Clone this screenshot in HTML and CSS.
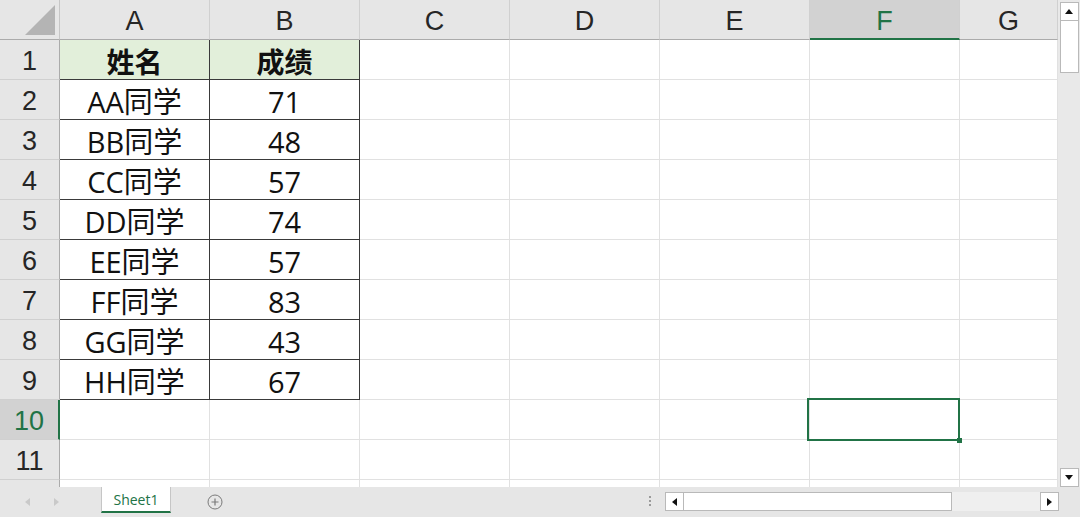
FILE: index.html
```html
<!DOCTYPE html>
<html lang="zh-CN">
<head>
    <meta charset="UTF-8">
    <title>成绩表 - Sheet1</title>
    <link rel="stylesheet" href="styles.css">
</head>
<body>
    <div class="workbook">
        <div class="main">
            <!-- Worksheet grid -->
            <div class="sheet">
                <div class="row head-row">
                    <div class="corner"><span class="corner-tri"></span></div>
                    <div class="col-head">A</div>
                    <div class="col-head">B</div>
                    <div class="col-head">C</div>
                    <div class="col-head">D</div>
                    <div class="col-head">E</div>
                    <div class="col-head active">F</div>
                    <div class="col-head">G</div>
                </div>
                <div class="row">
                    <div class="row-head">1</div>
                    <div class="cell data title">姓名</div>
                    <div class="cell data title">成绩</div>
                    <div class="cell"></div><div class="cell"></div><div class="cell"></div><div class="cell"></div><div class="cell"></div>
                </div>
                <div class="row">
                    <div class="row-head">2</div>
                    <div class="cell data">AA同学</div>
                    <div class="cell data">71</div>
                    <div class="cell"></div><div class="cell"></div><div class="cell"></div><div class="cell"></div><div class="cell"></div>
                </div>
                <div class="row">
                    <div class="row-head">3</div>
                    <div class="cell data">BB同学</div>
                    <div class="cell data">48</div>
                    <div class="cell"></div><div class="cell"></div><div class="cell"></div><div class="cell"></div><div class="cell"></div>
                </div>
                <div class="row">
                    <div class="row-head">4</div>
                    <div class="cell data">CC同学</div>
                    <div class="cell data">57</div>
                    <div class="cell"></div><div class="cell"></div><div class="cell"></div><div class="cell"></div><div class="cell"></div>
                </div>
                <div class="row">
                    <div class="row-head">5</div>
                    <div class="cell data">DD同学</div>
                    <div class="cell data">74</div>
                    <div class="cell"></div><div class="cell"></div><div class="cell"></div><div class="cell"></div><div class="cell"></div>
                </div>
                <div class="row">
                    <div class="row-head">6</div>
                    <div class="cell data">EE同学</div>
                    <div class="cell data">57</div>
                    <div class="cell"></div><div class="cell"></div><div class="cell"></div><div class="cell"></div><div class="cell"></div>
                </div>
                <div class="row">
                    <div class="row-head">7</div>
                    <div class="cell data">FF同学</div>
                    <div class="cell data">83</div>
                    <div class="cell"></div><div class="cell"></div><div class="cell"></div><div class="cell"></div><div class="cell"></div>
                </div>
                <div class="row">
                    <div class="row-head">8</div>
                    <div class="cell data">GG同学</div>
                    <div class="cell data">43</div>
                    <div class="cell"></div><div class="cell"></div><div class="cell"></div><div class="cell"></div><div class="cell"></div>
                </div>
                <div class="row">
                    <div class="row-head">9</div>
                    <div class="cell data">HH同学</div>
                    <div class="cell data">67</div>
                    <div class="cell"></div><div class="cell"></div><div class="cell"></div><div class="cell"></div><div class="cell"></div>
                </div>
                <div class="row">
                    <div class="row-head active">10</div>
                    <div class="cell"></div><div class="cell"></div><div class="cell"></div><div class="cell"></div><div class="cell"></div>
                    <div class="cell selected"></div>
                    <div class="cell"></div>
                </div>
                <div class="row">
                    <div class="row-head">11</div>
                    <div class="cell"></div><div class="cell"></div><div class="cell"></div><div class="cell"></div><div class="cell"></div><div class="cell"></div><div class="cell"></div>
                </div>
                <!-- next row only peeks in under row 11 -->
                <div class="row">
                    <div class="row-head"></div>
                    <div class="cell"></div><div class="cell"></div><div class="cell"></div><div class="cell"></div><div class="cell"></div><div class="cell"></div><div class="cell"></div>
                </div>
            </div>

            <!-- Vertical scrollbar -->
            <div class="vscroll">
                <div class="sb-btn"><span class="tri up"></span></div>
                <div class="vthumb"></div>
                <div class="vtrack"></div>
                <div class="sb-btn"><span class="tri down"></span></div>
            </div>
        </div>

        <!-- Sheet tabs and horizontal scrollbar -->
        <div class="tabbar">
            <div class="tab-nav">
                <span class="tri left faint"></span>
                <span class="tri right faint"></span>
            </div>
            <div class="tab">Sheet1</div>
            <div class="add-sheet">
                <svg width="16" height="16" viewBox="0 0 16 16">
                    <circle cx="8" cy="8" r="7" fill="none" stroke="#7a7a7a" stroke-width="1"/>
                    <path d="M8 4.5v7M4.5 8h7" stroke="#7a7a7a" stroke-width="1.2"/>
                </svg>
            </div>
            <div class="spacer"></div>
            <div class="split-dots"><i></i><i></i><i></i></div>
            <div class="hscroll">
                <div class="sb-btn"><span class="tri left"></span></div>
                <div class="hthumb"></div>
                <div class="htrack"></div>
                <div class="sb-btn"><span class="tri right"></span></div>
            </div>
        </div>
    </div>
</body>
</html>
```

FILE: styles.css
```css
* {
    box-sizing: border-box;
}

body {
    margin: 0;
    font-family: "Liberation Sans", Arial, sans-serif;
    background-color: #e6e6e6;
}

.workbook {
    width: 1080px;
    height: 517px;
    display: flex;
    flex-direction: column;
    overflow: hidden;
}

.main {
    display: flex;
    height: 487px;
    flex-shrink: 0;
}

/* grid */

.sheet {
    width: 1058px;
    height: 487px;
    overflow: hidden;
    background-color: white;
}

.row {
    display: grid;
    grid-template-columns: 60px repeat(6, 150px) 98px;
    grid-template-rows: 40px;
    height: 40px;
}

.head-row {
    background-color: #e6e6e6;
}

.corner {
    position: relative;
    border-right: 1px solid #c6c6c6;
    border-bottom: 1px solid #ababab;
}

.corner-tri {
    position: absolute;
    right: 4px;
    bottom: 4px;
    width: 0;
    height: 0;
    border-left: 30px solid transparent;
    border-bottom: 30px solid #b4b4b4;
}

.col-head {
    border-right: 1px solid #d0d0d0;
    border-bottom: 1px solid #ababab;
    font-size: 27px;
    line-height: 1;
    color: #262626;
    display: flex;
    align-items: center;
    justify-content: center;
    padding-top: 3px;
}

.col-head.active {
    background-color: #d2d2d2;
    color: #217346;
    border-bottom: 2px solid #217346;
    padding-top: 4px;
}

.row-head {
    background-color: #e6e6e6;
    border-right: 1px solid #ababab;
    border-bottom: 1px solid #d0d0d0;
    font-size: 27px;
    line-height: 1;
    color: #262626;
    display: flex;
    align-items: center;
    justify-content: center;
    padding-top: 3px;
}

.row-head.active {
    background-color: #d2d2d2;
    color: #217346;
    border-right: 2px solid #217346;
}

.cell {
    min-height: 0;
    border-right: 1px solid #e1e1e1;
    border-bottom: 1px solid #e1e1e1;
}

.data {
    border-right-color: #3a3a3a;
    border-bottom-color: #3a3a3a;
    font-family: "Open Sans", "Noto Sans CJK SC", sans-serif;
    font-size: 29px;
    line-height: 1;
    color: #111;
    display: flex;
    align-items: center;
    justify-content: center;
    padding-top: 3px;
    overflow: hidden;
}

.title {
    background-color: #e2efda;
    font-family: "Noto Sans CJK SC", sans-serif;
    font-weight: bold;
    font-size: 28px;
    padding-top: 2px;
}

.selected {
    position: relative;
}

.selected::after {
    content: "";
    position: absolute;
    left: -3px;
    top: -2px;
    right: -1px;
    bottom: -2px;
    border: 2px solid #217346;
}

.selected::before {
    content: "";
    position: absolute;
    right: -3px;
    bottom: -4px;
    width: 5px;
    height: 5px;
    background-color: #217346;
    z-index: 1;
}

/* scrollbars */

.vscroll {
    width: 22px;
    display: flex;
    flex-direction: column;
    align-items: center;
    padding-top: 2px;
    background-color: #e9e9e9;
}

.sb-btn {
    width: 19px;
    height: 19px;
    background-color: white;
    border: 1px solid #b9b9b9;
    display: flex;
    align-items: center;
    justify-content: center;
    flex-shrink: 0;
}

.vthumb {
    width: 19px;
    height: 52px;
    background-color: white;
    border: 1px solid #b9b9b9;
    border-top: none;
}

.vtrack {
    flex: 1;
}

.tri {
    width: 0;
    height: 0;
    border: 4px solid transparent;
}

.tri.up {
    border-bottom: 5px solid #111;
    border-top: none;
}

.tri.down {
    border-top: 5px solid #111;
    border-bottom: none;
}

.tri.left {
    border-right: 5px solid #111;
    border-left: none;
}

.tri.right {
    border-left: 5px solid #111;
    border-right: none;
}

.tri.faint.left {
    border-right-color: #c9c9c9;
}

.tri.faint.right {
    border-left-color: #c9c9c9;
}

/* tab bar */

.tabbar {
    height: 30px;
    display: flex;
    align-items: flex-start;
    background-color: #e6e6e6;
}

.tab-nav {
    width: 101px;
    height: 30px;
    display: flex;
    align-items: center;
    gap: 24px;
    padding-left: 25px;
}

.tab {
    width: 70px;
    height: 26px;
    background-color: white;
    border-left: 1px solid #c6c6c6;
    border-right: 1px solid #c6c6c6;
    border-bottom: 2px solid #217346;
    color: #217346;
    font-family: "Open Sans", sans-serif;
    font-size: 14px;
    text-align: center;
    line-height: 25px;
}

.add-sheet {
    margin-left: 36px;
    margin-top: 7px;
    height: 16px;
}

.spacer {
    flex: 1;
}

.split-dots {
    display: flex;
    flex-direction: column;
    gap: 2px;
    margin-top: 9px;
    margin-right: 14px;
}

.split-dots i {
    width: 2px;
    height: 2px;
    background-color: #9a9a9a;
}

.hscroll {
    display: flex;
    margin-top: 5px;
    margin-right: 21px;
}

.hthumb {
    width: 268px;
    height: 19px;
    background-color: white;
    border: 1px solid #b9b9b9;
    border-left: none;
}

.htrack {
    width: 88px;
    background-color: #efefef;
}
```
